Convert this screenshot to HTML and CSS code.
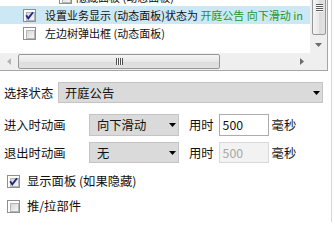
FILE: index.html
```html
<!DOCTYPE html>
<html>
<head>
<meta charset="utf-8">
<link rel="stylesheet" href="styles.css">
</head>
<body>
<div class="panel">
  <div class="tree">
    <div class="tree-body">
      <div class="trow lvl2"><span class="cb"><i></i></span><span class="tlabel">隐藏面板 (动态面板)</span></div>
      <div class="trow sel"><span class="cb"><i></i><svg class="tick" viewBox="0 0 13 13"><path d="M3.2 6.2 L5.3 9.4 L10 3.2" fill="none" stroke="#1b2a85" stroke-width="1.9"/></svg></span><span class="tlabel">设置业务显示 (动态面板)状态为 <span class="green">开庭公告 向下滑动 in</span></span></div>
      <div class="trow"><span class="cb"><i></i></span><span class="tlabel">左边树弹出框 (动态面板)</span></div>
    </div>
    <div class="vscroll">
      <div class="vthumb"><span class="vgrip"></span></div>
      <div class="vbtn"><svg width="7" height="4" viewBox="0 0 7 4"><polygon points="0,0 7,0 3.5,4" fill="#6d6d6d"/></svg></div>
    </div>
    <div class="hscroll">
      <div class="hbtn"><svg width="4" height="7" viewBox="0 0 4 7"><polygon points="4,0 4,7 0,3.5" fill="#b4b4b4"/></svg></div>
      <div class="hthumb"><span class="hgrip"></span></div>
      <div class="hspace"></div>
      <div class="hbtn"><svg width="4" height="7" viewBox="0 0 4 7"><polygon points="0,0 0,7 4,3.5" fill="#6d6d6d"/></svg></div>
    </div>
    <div class="corner"></div>
  </div>

  <div class="form">
    <div class="row r-state">
      <span class="lbl-state">选择状态</span>
      <div class="select select-wide"><span>开庭公告</span><svg width="7" height="4" viewBox="0 0 7 4"><polygon points="0,0 7,0 3.5,4" fill="#000"/></svg></div>
    </div>
    <div class="row r-anim">
      <span class="lbl-anim">进入时动画</span>
      <div class="select select-narrow"><span>向下滑动</span><svg width="7" height="4" viewBox="0 0 7 4"><polygon points="0,0 7,0 3.5,4" fill="#000"/></svg></div>
      <span class="unit-lbl">用时</span>
      <div class="num">500</div>
      <span class="ms">毫秒</span>
    </div>
    <div class="row r-anim r-out">
      <span class="lbl-anim">退出时动画</span>
      <div class="select select-narrow"><span>无</span><svg width="7" height="4" viewBox="0 0 7 4"><polygon points="0,0 7,0 3.5,4" fill="#000"/></svg></div>
      <span class="unit-lbl">用时</span>
      <div class="num disabled">500</div>
      <span class="ms">毫秒</span>
    </div>
    <div class="row check-row c1">
      <span class="cb"><i></i><svg class="tick" viewBox="0 0 13 13"><path d="M3.2 6.2 L5.3 9.4 L10 3.2" fill="none" stroke="#1b2a85" stroke-width="1.9"/></svg></span>
      <span>显示面板 (如果隐藏)</span>
    </div>
    <div class="row check-row c2">
      <span class="cb"><i></i></span>
      <span>推/拉部件</span>
    </div>
  </div>
</div>
</body>
</html>
```

FILE: styles.css
```css
html, body {
  margin: 0;
  padding: 0;
  background: #fff;
}
body {
  width: 335px;
  height: 222px;
  overflow: hidden;
  font-family: "Noto Sans CJK SC", "Noto Sans", sans-serif;
  color: #111;
}
.panel {
  width: 331px;
  height: 222px;
  border-right: 1px solid #d6d6d6;
}

/* tree view */
.tree {
  width: 327px;
  height: 70px;
  border-right: 1px solid #a5a5a5;
  border-bottom: 1px solid #a5a5a5;
  display: grid;
  grid-template-columns: 310px 17px;
  grid-template-rows: 53px 17px;
}
.tree-body {
  overflow: hidden;
  font-size: 11px;
}
.trow {
  height: 18px;
  display: flex;
  align-items: center;
  padding-left: 23px;
  white-space: nowrap;
}
.trow.lvl2 {
  margin-top: -12px;
  padding-left: 59px;
}
.trow.lvl2 .tlabel { margin-left: 4px; }
.trow .tlabel { margin-left: 9px; line-height: 18px; }
.trow.sel { background: #cde8f5; }
.green { color: #21962a; }

/* checkbox */
.cb {
  position: relative;
  flex: none;
  width: 13px;
  height: 13px;
  box-sizing: border-box;
  border: 1px solid #8e8f8f;
  background: #fff;
  padding: 2px;
}
.cb i {
  display: block;
  width: 7px;
  height: 7px;
  border: 1px solid #b5b5b5;
  background: linear-gradient(135deg, #d6d6d6, #f6f6f6);
}
.tick {
  position: absolute;
  left: -1px;
  top: -1px;
  width: 13px;
  height: 13px;
}

/* scrollbars */
.vscroll {
  background: #efefef;
  overflow: hidden;
  display: flex;
  flex-direction: column;
}
.vthumb {
  margin: -14px 1px 0 2px;
  height: 49px;
  box-sizing: border-box;
  border: 1px solid #979797;
  border-radius: 2px;
  background: linear-gradient(90deg, #f4f4f4, #e8e8e8 50%, #dcdcdc 51%, #e2e2e2);
  display: flex;
  flex-direction: column;
  justify-content: flex-end;
  align-items: center;
  padding-bottom: 22px;
}
.vgrip {
  width: 7px;
  height: 8px;
  background: repeating-linear-gradient(180deg, #5d5d5d 0 1px, #f8f8f8 1px 2px);
}
.vbtn {
  height: 17px;
  margin-top: 1px;
  display: flex;
  align-items: center;
  justify-content: center;
}
.vbtn svg { display: block; }

.hscroll {
  background: #efefef;
  display: flex;
  align-items: stretch;
}
.hbtn {
  width: 17px;
  flex: none;
  display: flex;
  align-items: center;
  justify-content: center;
}
.hbtn svg { display: block; }
.hthumb {
  width: 202px;
  margin: 1px 0 1px 1px;
  box-sizing: border-box;
  border: 1px solid #979797;
  border-radius: 2px;
  background: linear-gradient(180deg, #f4f4f4, #e8e8e8 50%, #dcdcdc 51%, #e2e2e2);
  display: flex;
  align-items: center;
  justify-content: center;
}
.hgrip {
  width: 7px;
  height: 7px;
  background: repeating-linear-gradient(90deg, #4f4f4f 0 1px, #f8f8f8 1px 2px);
}
.hspace { flex: 1; }
.corner { background: #efefef; }

/* form */
.form {
  padding-left: 4px;
  font-size: 12.3px;
  color: #111;
}
.row {
  display: flex;
  align-items: center;
  white-space: nowrap;
}
.r-state {
  margin-top: 11px;
  height: 21px;
}
.lbl-state { width: 54px; }
.select {
  height: 100%;
  box-sizing: border-box;
  border: 1px solid #c4c4c4;
  background: #dadada;
  display: flex;
  align-items: center;
  justify-content: space-between;
  padding: 0 2px 0 6px;
}
.select svg { display: block; }
.select-wide { width: 265px; }
.r-anim {
  margin-top: 11px;
  height: 22px;
}
.r-out {
  margin-top: 6px;
  height: 21px;
}
.lbl-anim { width: 85px; }
.select-narrow {
  width: 90px;
  padding-left: 7px;
}
.unit-lbl { margin-left: 10px; }
.num {
  width: 50px;
  height: 22px;
  margin-left: 5px;
  box-sizing: border-box;
  border: 1px solid #acacac;
  background: #fff;
  padding-left: 3px;
  display: flex;
  align-items: center;
}
.num.disabled {
  background: #f2f2f2;
  border-color: #d9d9d9;
  color: #a6a6a6;
  height: 21px;
}
.ms { margin-left: 3px; }

.check-row {
  height: 22px;
  padding-left: 3px;
}
.check-row .cb { margin-right: 7px; }
.c1 { margin-top: 7px; }
.c2 { margin-top: 3px; }
```
